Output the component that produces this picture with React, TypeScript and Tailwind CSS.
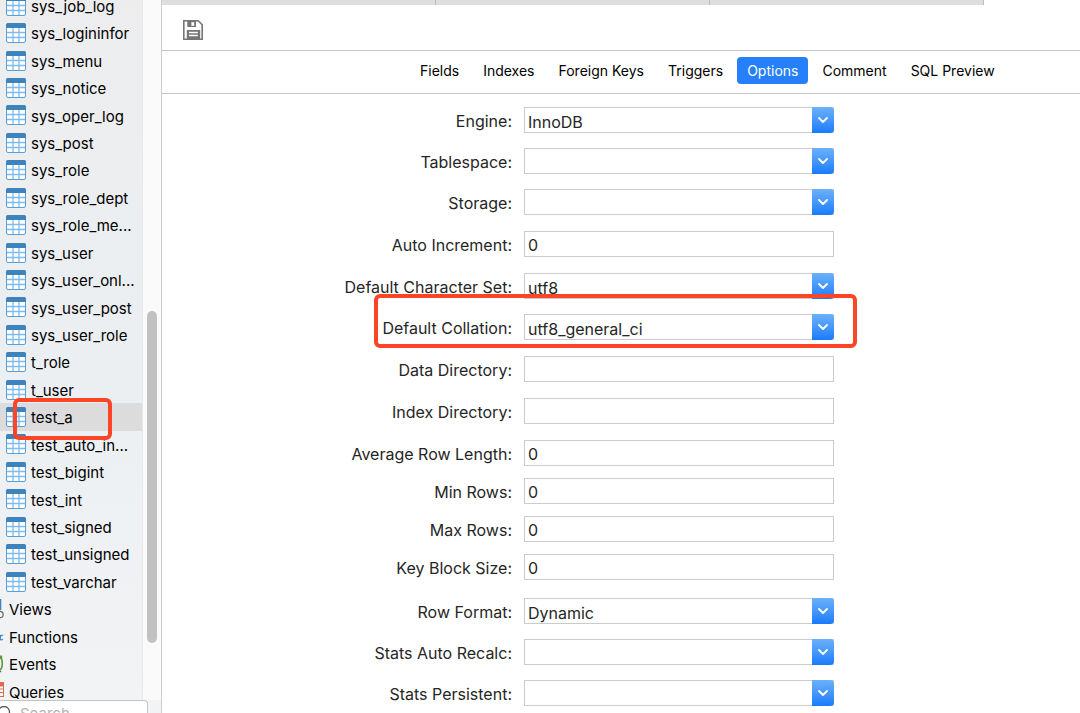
import { useState } from 'react';
import clsx from 'clsx';

const tables = [
  'sys_job_log',
  'sys_logininfor',
  'sys_menu',
  'sys_notice',
  'sys_oper_log',
  'sys_post',
  'sys_role',
  'sys_role_dept',
  'sys_role_me...',
  'sys_user',
  'sys_user_onl...',
  'sys_user_post',
  'sys_user_role',
  't_role',
  't_user',
  'test_a',
  'test_auto_in...',
  'test_bigint',
  'test_int',
  'test_signed',
  'test_unsigned',
  'test_varchar',
];

const tabs = ['Fields', 'Indexes', 'Foreign Keys', 'Triggers', 'Options', 'Comment', 'SQL Preview'];

interface Field {
  id: string;
  label: string;
  value: string;
  combo?: boolean;
  marked?: boolean;
}

interface FieldGroup {
  className: string;
  fields: Field[];
}

const groups: FieldGroup[] = [
  {
    className: 'gap-[15px]',
    fields: [
      { id: 'engine', label: 'Engine:', value: 'InnoDB', combo: true },
      { id: 'tablespace', label: 'Tablespace:', value: '', combo: true },
      { id: 'storage', label: 'Storage:', value: '', combo: true },
    ],
  },
  {
    className: 'mt-4',
    fields: [{ id: 'auto-increment', label: 'Auto Increment:', value: '0' }],
  },
  {
    className: 'mt-4 gap-[15px]',
    fields: [
      { id: 'charset', label: 'Default Character Set:', value: 'utf8', combo: true },
      { id: 'collation', label: 'Default Collation:', value: 'utf8_general_ci', combo: true, marked: true },
    ],
  },
  {
    className: 'mt-4 gap-4',
    fields: [
      { id: 'data-directory', label: 'Data Directory:', value: '' },
      { id: 'index-directory', label: 'Index Directory:', value: '' },
    ],
  },
  {
    className: 'mt-4 gap-3',
    fields: [
      { id: 'avg-row-length', label: 'Average Row Length:', value: '0' },
      { id: 'min-rows', label: 'Min Rows:', value: '0' },
      { id: 'max-rows', label: 'Max Rows:', value: '0' },
      { id: 'key-block-size', label: 'Key Block Size:', value: '0' },
    ],
  },
  {
    className: 'mt-[18px] gap-[15px]',
    fields: [
      { id: 'row-format', label: 'Row Format:', value: 'Dynamic', combo: true },
      { id: 'stats-auto-recalc', label: 'Stats Auto Recalc:', value: '', combo: true },
      { id: 'stats-persistent', label: 'Stats Persistent:', value: '', combo: true },
    ],
  },
];

function TableIcon() {
  return (
    <svg viewBox="0 0 20 20" className="size-5 shrink-0" aria-hidden="true">
      <rect x="0.5" y="0.5" width="19" height="19" rx="1.5" fill="#fff" stroke="#5a9fd6" />
      <path d="M7 5v14M13 5v14M1 9.5h18M1 14.5h18" stroke="#7dbcec" strokeWidth="1.3" />
      <path d="M0 5V2a2 2 0 0 1 2-2h16a2 2 0 0 1 2 2v3z" fill="#3f83bd" />
    </svg>
  );
}

function SaveIcon() {
  return (
    <svg viewBox="0 0 20 20" className="size-5" aria-hidden="true">
      <path d="M.8.8h14.4l4 4v14.4H.8z" fill="#fff" stroke="#757575" strokeWidth="1.6" />
      <path d="M4.300 1h8.700v6H4.300z" fill="#757575" />
      <path d="M8.400 2.200h2.800v3.600H8.400z" fill="#fff" />
      <path d="M3.800 10h13.400v9.400H3.800z" fill="#757575" />
      <path d="M6 11.700h8.800v1.500H6zM6 14.800h8.800v1.500H6z" fill="#fff" />
    </svg>
  );
}

function ViewsIcon() {
  return (
    <svg viewBox="0 0 5 20" className="h-5 w-[5px] shrink-0" aria-hidden="true">
      <path d="M0 0h1.300v11H0z" fill="#3f83bd" />
      <circle cx="0" cy="15.500" r="3.200" fill="none" stroke="#666" strokeWidth="1.200" />
    </svg>
  );
}

function FunctionsIcon() {
  return (
    <svg viewBox="0 0 5 20" className="h-5 w-[5px] shrink-0" aria-hidden="true">
      <path d="M3 9.500C1.500 8.500.5 10 .3 12c-.2 2 1.200 2.500 2.500 1.300M0 9.500h1" fill="none" stroke="#3f83bd" strokeWidth="1.200" />
    </svg>
  );
}

function EventsIcon() {
  return (
    <svg viewBox="0 0 5 20" className="h-5 w-[5px] shrink-0" aria-hidden="true">
      <path d="M0 3c3 2 3 11 0 13" fill="none" stroke="#5c9c3f" strokeWidth="1.600" />
      <path d="M0 1.500h2.200v3.500H0z" fill="#5c9c3f" />
      <path d="M0 17.500h1.200" stroke="#666" strokeWidth="1.500" />
    </svg>
  );
}

function QueriesIcon() {
  return (
    <svg viewBox="0 0 5 20" className="h-5 w-[5px] shrink-0" aria-hidden="true">
      <path d="M0 1h4v15H0z" fill="#fff" />
      <path d="M0 8h4M0 11.500h4M0 15.500h4M3.500 3v13" stroke="#dd6a50" />
      <path d="M0 1h4v4.500H0z" fill="#dd6a50" />
    </svg>
  );
}

const categories = [
  { name: 'Views', Icon: ViewsIcon },
  { name: 'Functions', Icon: FunctionsIcon },
  { name: 'Events', Icon: EventsIcon },
  { name: 'Queries', Icon: QueriesIcon },
];

function Sidebar() {
  const [selected, setSelected] = useState('test_a');

  return (
    <aside className="relative flex w-[162px] shrink-0 overflow-hidden border-r border-[#cdcdcd] bg-[#fafafa]">
      <ul className="-mt-2 grid h-screen w-[142px] auto-rows-fr bg-linear-to-b from-[#ededee] via-[#ebeff2] to-[#f2f3f5] text-[15px]">
        {tables.map((name) => (
          <li key={name} className="relative grid">
            <button
              type="button"
              onClick={() => setSelected(name)}
              className={clsx('flex items-center gap-[5px] pl-[6px] text-left', name === selected && 'bg-[#dcdcdc]')}
            >
              <TableIcon />
              <span className="pt-[3px]">{name}</span>
            </button>
            {name === 'test_a' && (
              <span className="pointer-events-none absolute -top-[5px] -bottom-[9px] left-[13px] z-10 w-[99px] rounded-md border-4 border-[#fc4426]" />
            )}
          </li>
        ))}
        {categories.map(({ name, Icon }) => (
          <li key={name} className="grid">
            <button type="button" className="flex items-center gap-1 text-left">
              <Icon />
              <span className="pt-[3px]">{name}</span>
            </button>
          </li>
        ))}
      </ul>
      <div className="flex-1 border-l border-[#e8e8e8] px-1 pt-[311px]">
        <div className="h-[332px] w-[10px] rounded-full bg-[#c1c1c1]" />
      </div>
      <div className="absolute inset-x-0 bottom-0 h-[13px] overflow-hidden bg-[#f2f3f5]">
        <label className="flex h-7 w-[148px] items-center gap-2 rounded-tr border border-l-0 border-[#c4c4c4] bg-white">
          <svg viewBox="0 0 12 16" className="h-4 w-3 shrink-0" fill="none" stroke="#555" strokeWidth="1.3" aria-hidden="true">
            <circle cx="4" cy="6" r="5.5" />
            <path d="m8 10 4 4" />
          </svg>
          <input
            type="search"
            placeholder="Search"
            aria-label="Search"
            className="w-full bg-transparent text-[15px] outline-none placeholder:text-[#b5b5b5]"
          />
        </label>
      </div>
    </aside>
  );
}

function FieldRow({ field }: { field: Field }) {
  return (
    <div className="relative flex h-[26px] items-center gap-3">
      <label htmlFor={field.id} className="w-[350px] shrink-0 pt-0.5 text-right">
        {field.label}
      </label>
      {field.combo ? (
        <div className="relative h-[26px] w-[310px]">
          <select
            id={field.id}
            defaultValue={field.value}
            className="h-full w-full appearance-none border border-[#cbcbcb] bg-white pt-0.5 pr-6 pl-[3px] outline-none"
          >
            <option value={field.value}>{field.value}</option>
          </select>
          <span className="pointer-events-none absolute inset-y-0 right-0 flex w-[22px] items-center justify-center rounded-r bg-linear-to-b from-[#6bb1fa] to-[#157bfb]">
            <svg viewBox="0 0 10 6" className="h-1.5 w-2.5" fill="none" stroke="#fff" strokeWidth="1.8" aria-hidden="true">
              <path d="m1 1 4 4 4-4" strokeLinecap="round" strokeLinejoin="round" />
            </svg>
          </span>
        </div>
      ) : (
        <input
          id={field.id}
          type="text"
          defaultValue={field.value}
          className="h-[26px] w-[310px] border border-[#cbcbcb] bg-white pt-0.5 pl-[3px] outline-none"
        />
      )}
      {field.marked && (
        <span className="pointer-events-none absolute -top-5 -bottom-2 left-[212px] z-10 w-[483px] rounded-md border-4 border-[#fc4426]" />
      )}
    </div>
  );
}

export default function App() {
  const [active, setActive] = useState('Options');

  return (
    <div className="flex h-screen overflow-hidden bg-white font-['Inter',sans-serif] text-black">
      <Sidebar />
      <main className="min-w-0 flex-1">
        <div className="flex h-[5px] bg-white">
          <div className="w-[274px] border-r border-[#bdbdbd] bg-[#dedede]" />
          <div className="w-[274px] border-r border-[#bdbdbd] bg-[#dedede]" />
          <div className="w-[274px] border-r border-[#bdbdbd] bg-[#dedede]" />
        </div>
        <div className="flex h-[46px] items-center border-b border-[#c4c4c4] pt-1 pl-[21px]">
          <button type="button" aria-label="Save">
            <SaveIcon />
          </button>
        </div>
        <nav className="flex h-[43px] gap-1 border-b border-[#c4c4c4] pt-1.5 pl-[248px] text-sm">
          {tabs.map((tab) => (
            <button
              key={tab}
              type="button"
              onClick={() => setActive(tab)}
              className={clsx(
                'h-[27px] shrink-0 rounded px-2.5 whitespace-nowrap',
                tab === active && 'bg-[#267ffb] text-white',
              )}
            >
              {tab}
            </button>
          ))}
        </nav>
        <form className="flex flex-col pt-[13px] text-base text-[#262626]">
          {groups.map((group) => (
            <div key={group.fields[0].id} className={clsx('flex flex-col', group.className)}>
              {group.fields.map((field) => (
                <FieldRow key={field.id} field={field} />
              ))}
            </div>
          ))}
        </form>
      </main>
    </div>
  );
}
